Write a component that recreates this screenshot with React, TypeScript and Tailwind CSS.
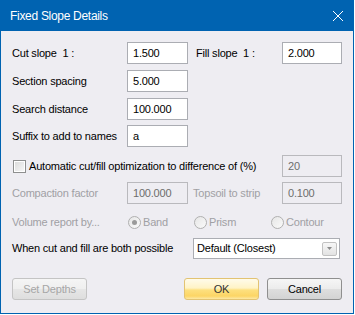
import React from "react";

function TextBox({ value, w, disabled }: { value: string; w: string; disabled?: boolean }) {
  return (
    <div
      className={
        "h-[22px] flex items-center pl-[5px] border " +
        w +
        (disabled
          ? " border-[#b9b9bd] bg-[#eeedf2] text-[#6d6d6d]"
          : " border-[#abadb3] bg-white text-black")
      }
    >
      {value}
    </div>
  );
}

function Radio({ label, checked }: { label: string; checked?: boolean }) {
  return (
    <div className="flex items-center">
      <div className="w-[13px] h-[13px] rounded-full border border-[#b0b0b0] bg-[linear-gradient(135deg,#e6e6e6,#fafafa)] flex items-center justify-center">
        {checked && <div className="w-[5px] h-[5px] rounded-full bg-[#9a9a9a]" />}
      </div>
      <span className="ml-[2px] text-[#a0a0a4]">{label}</span>
    </div>
  );
}

function Btn({ label, kind }: { label: string; kind: "ok" | "cancel" | "disabled" }) {
  const cls =
    kind === "ok"
      ? "border-[#e2c372] text-[#333] bg-[linear-gradient(to_bottom,#fffbea_0%,#fff3c6_45%,#fde07f_55%,#fcd565_85%,#fde9a6_100%)]"
      : kind === "cancel"
      ? "border-[#8f8f8f] text-black bg-[linear-gradient(to_bottom,#f6f6f6_0%,#ececec_48%,#dedede_52%,#d3d3d3_100%)]"
      : "border-[#c4c4c4] text-[#a6a6a6] bg-[linear-gradient(to_bottom,#f5f5f5_0%,#efefef_48%,#e6e6e6_52%,#dedede_100%)]";
  return (
    <div className={"w-[75px] h-[22px] rounded-[3px] border flex items-center justify-center " + cls}>
      {label}
    </div>
  );
}

export default function App() {
  return (
    <div className="w-[355px] h-[315px] bg-white font-['Liberation_Sans',Arial,sans-serif]">
      <div className="w-[354px] h-[314px] flex flex-col bg-[#0063b1] px-px pb-px">
        <div className="h-[31px] flex items-center justify-between pl-[9px] pr-[9px] text-white text-[12px] tracking-[-0.3px]">
          <span>Fixed Slope Details</span>
          <svg width="12" height="12" viewBox="0 0 12 12">
            <path d="M1 1 L11 11 M11 1 L1 11" stroke="white" strokeWidth="1" />
          </svg>
        </div>
        <div className="flex-1 flex flex-col bg-[#eeedf2] pl-[11px] pt-[11px] text-[11px] tracking-[-0.2px] text-black">
          <div className="flex items-center h-[22px]">
            <span className="w-[115px] whitespace-pre">Cut slope  1 :</span>
            <TextBox value="1.500" w="w-[61px]" />
            <span className="ml-[8px] w-[86px] whitespace-pre">Fill slope  1 :</span>
            <TextBox value="2.000" w="w-[60px]" />
          </div>
          <div className="flex items-center h-[22px] mt-[6px]">
            <span className="w-[115px]">Section spacing</span>
            <TextBox value="5.000" w="w-[61px]" />
          </div>
          <div className="flex items-center h-[22px] mt-[6px]">
            <span className="w-[115px]">Search distance</span>
            <TextBox value="100.000" w="w-[61px]" />
          </div>
          <div className="flex items-center h-[22px] mt-[5px]">
            <span className="w-[115px]">Suffix to add to names</span>
            <TextBox value="a" w="w-[61px]" />
          </div>
          <div className="flex items-center h-[22px] mt-[8px]">
            <div className="w-[270px] flex items-center">
              <div className="ml-[1px] w-[13px] h-[13px] border border-[#8e8f8f] bg-white p-[1px]">
                <div className="w-full h-full bg-[linear-gradient(135deg,#dcdcdc,#f6f6f6)]" />
              </div>
              <span className="ml-[3px]">Automatic cut/fill optimization to difference of (%)</span>
            </div>
            <TextBox value="20" w="w-[60px]" disabled />
          </div>
          <div className="flex items-center h-[22px] mt-[5px]">
            <span className="w-[115px] text-[#a0a0a4]">Compaction factor</span>
            <TextBox value="100.000" w="w-[61px]" disabled />
            <span className="ml-[5px] w-[89px] text-[#a0a0a4]">Topsoil to strip</span>
            <TextBox value="0.100" w="w-[60px]" disabled />
          </div>
          <div className="flex items-center h-[22px] mt-[7px]">
            <span className="w-[116px] text-[#a0a0a4]">Volume report by...</span>
            <div className="w-[66px]">
              <Radio label="Band" checked />
            </div>
            <div className="w-[77px]">
              <Radio label="Prism" />
            </div>
            <Radio label="Contour" />
          </div>
          <div className="flex items-center h-[21px] mt-[5px]">
            <span className="w-[181px]">When cut and fill are both possible</span>
            <div className="w-[147px] h-[21px] border border-[#abadb3] bg-white flex items-center justify-between pl-[3px] pr-[2px]">
              <span>Default (Closest)</span>
              <div className="w-[15px] h-[14px] rounded-[2px] border border-[#c2c2c2] bg-[linear-gradient(to_bottom,#f7f7f7,#e3e3e3)] flex items-center justify-center">
                <svg width="5" height="3" viewBox="0 0 5 3">
                  <path d="M0 0 H5 L2.5 3 Z" fill="#8a8a8a" />
                </svg>
              </div>
            </div>
          </div>
          <div className="flex items-center h-[22px] mt-[19px]">
            <Btn label="Set Depths" kind="disabled" />
            <div className="ml-[97px]">
              <Btn label="OK" kind="ok" />
            </div>
            <div className="ml-[8px]">
              <Btn label="Cancel" kind="cancel" />
            </div>
          </div>
        </div>
      </div>
    </div>
  );
}
